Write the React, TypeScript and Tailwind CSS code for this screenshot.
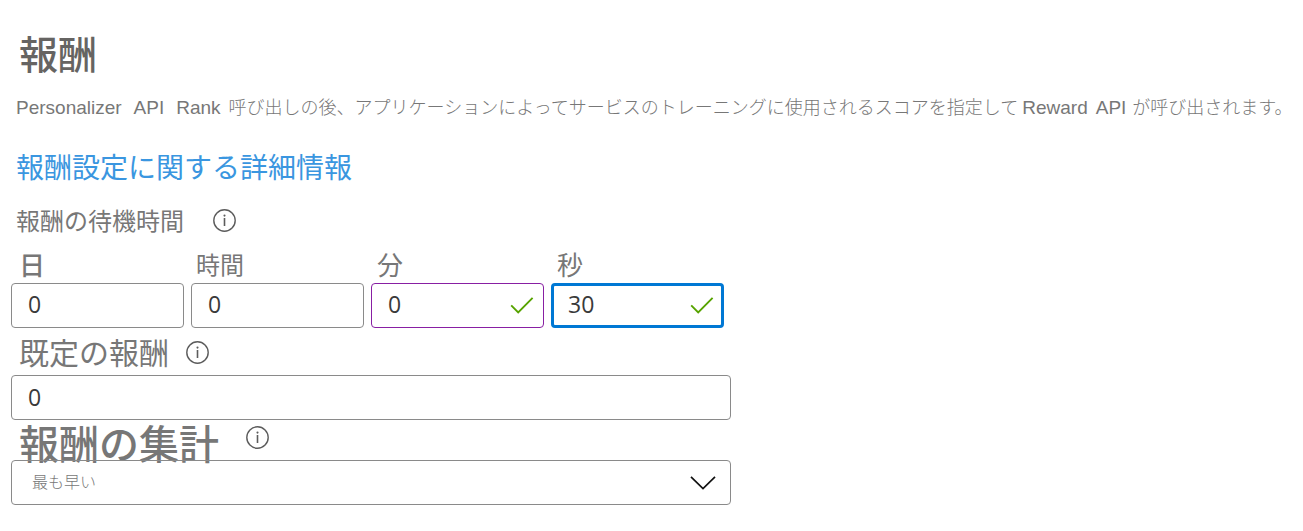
import { useState } from "react";

function InfoButton({ label, className = "" }: { label: string; className?: string }) {
  return (
    <button type="button" aria-label={label} className={`size-6 shrink-0 text-[#5c5c5c] ${className}`}>
      <svg viewBox="0 0 24 24" fill="none" className="size-6">
        <circle cx="12.5" cy="12.5" r="10.7" stroke="currentColor" strokeWidth="1.4" />
        <path d="M12.5 10V18" stroke="currentColor" strokeWidth="1.6" />
        <circle cx="12.5" cy="7.6" r="1.05" fill="currentColor" />
      </svg>
    </button>
  );
}

function CheckMark() {
  return (
    <svg
      viewBox="0 0 24 18"
      fill="none"
      className="pointer-events-none absolute right-2.5 top-[13px] h-[18px] w-6"
      aria-hidden="true"
    >
      <path d="M1.2 9.3L8.2 16.3L22.6 1.9" stroke="#57a300" strokeWidth="1.9" />
    </svg>
  );
}

type Field = { id: string; label: string; initial: string; valid: boolean; labelStyle: string; boxStyle: string };

const fields: Field[] = [
  { id: "days", label: "日", initial: "0", valid: false, labelStyle: "pl-2 text-[26px] font-medium", boxStyle: "border border-[#8a8a8a] px-4" },
  { id: "hours", label: "時間", initial: "0", valid: false, labelStyle: "pl-[5px] text-2xl", boxStyle: "border border-[#8a8a8a] px-4" },
  { id: "minutes", label: "分", initial: "0", valid: true, labelStyle: "pl-1.5 text-[26px]", boxStyle: "border border-[#881fa3] px-4" },
  { id: "seconds", label: "秒", initial: "30", valid: true, labelStyle: "pl-1.5 text-[26px]", boxStyle: "border-3 border-[#0078d4] px-3.5" },
];

function DurationField({ field }: { field: Field }) {
  const [value, setValue] = useState(field.initial);
  return (
    <div className="min-w-0 flex-1">
      <label htmlFor={field.id} className={`mb-[3px] block leading-8 ${field.labelStyle}`}>
        {field.label}
      </label>
      <div className="relative">
        <input
          id={field.id}
          value={value}
          onChange={(e) => setValue(e.target.value)}
          className={`block h-[45px] w-full rounded bg-white pb-1 font-['Open_Sans',sans-serif] text-[23px] text-[#3a3a3a] outline-none ${field.boxStyle}`}
        />
        {field.valid && <CheckMark />}
      </div>
    </div>
  );
}

export default function App() {
  const [reward, setReward] = useState("0");
  return (
    <main className="bg-white pb-6 pl-[11px] pt-8 font-['Noto_Sans_CJK_JP',sans-serif] text-[#777]">
      <h1 className="pl-2 text-[39px] font-medium leading-10 text-[#666462]">報酬</h1>

      <p className="mt-5 pl-[5px] text-lg font-light leading-7">
        <span className="mr-2 inline-flex gap-3 font-['Liberation_Sans',sans-serif] text-[19px] font-normal leading-none">
          <span>Personalizer</span>
          <span>API</span>
          <span>Rank</span>
        </span>
        呼び出しの後、アプリケーションによってサービスのトレーニングに使用されるスコアを指定して
        <span className="ml-1 mr-1.5 inline-flex gap-2 font-['Liberation_Sans',sans-serif] text-[19px] font-normal leading-none">
          <span>Reward</span>
          <span>API</span>
        </span>
        が呼び出されます。
      </p>

      <a href="#reward-settings" className="mt-[30px] block w-fit pl-[5px] text-[28px] leading-8 text-[#3a96e0]">
        報酬設定に関する詳細情報
      </a>

      <div className="max-w-[720px]">
        <section aria-labelledby="wait-time">
          <div className="mt-[26px] flex h-6 items-center gap-7 pl-[5px]">
            <h2 id="wait-time" className="text-2xl leading-6">報酬の待機時間</h2>
            <InfoButton label="報酬の待機時間" />
          </div>
          <div className="mr-[7px] mt-4 flex gap-[7px]">
            {fields.map((field) => (
              <DurationField key={field.id} field={field} />
            ))}
          </div>
        </section>

        <div className="flex h-[47px] items-center gap-4 pl-2">
          <label htmlFor="default-reward" className="text-[30px] leading-[47px]">既定の報酬</label>
          <InfoButton label="既定の報酬" />
        </div>
        <input
          id="default-reward"
          value={reward}
          onChange={(e) => setReward(e.target.value)}
          className="block h-[45px] w-full rounded border border-[#8a8a8a] bg-white px-4 pb-0.5 font-['Open_Sans',sans-serif] text-[23px] text-[#3a3a3a] outline-none"
        />

        <div className="flex h-10 items-start gap-[26px] pl-2">
          <label htmlFor="aggregation" className="text-[40px] font-medium leading-[44px]">報酬の集計</label>
          <InfoButton label="報酬の集計" className="mt-[5px]" />
        </div>
        <div className="relative">
          <select
            id="aggregation"
            className="block h-[45px] w-full appearance-none rounded border border-[#8a8a8a] bg-transparent pb-1 pl-5 pr-12 text-base font-light outline-none"
          >
            <option>最も早い</option>
          </select>
          <svg
            viewBox="0 0 28 16"
            fill="none"
            className="pointer-events-none absolute right-3.5 top-[15px] h-4 w-7"
            aria-hidden="true"
          >
            <path d="M2 1.8L14 13.6L26 1.8" stroke="#111" strokeWidth="1.7" />
          </svg>
        </div>
      </div>
    </main>
  );
}
